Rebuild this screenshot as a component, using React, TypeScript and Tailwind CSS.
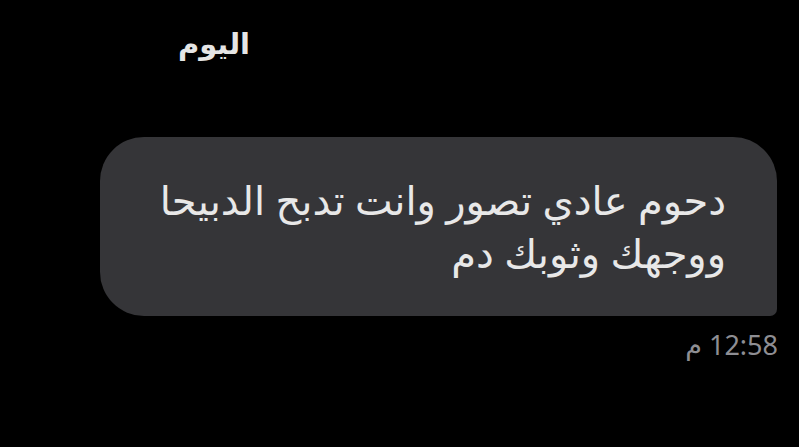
export default function App() {
  return (
    <div
      dir="rtl"
      className="w-[799px] h-[447px] bg-black overflow-hidden flex flex-col"
      style={{ fontFamily: '"Noto Sans", "DejaVu Sans", sans-serif' }}
    >
      <div className="h-[90px] flex items-start pr-[549px] pt-[22px]">
        <span className="text-[29px] font-bold text-[#e5e5e5] leading-[42px]">اليوم</span>
      </div>
      <div className="pl-[100px] pr-[22px] pt-[47px]">
        <div className="h-[179px] bg-[#353538] rounded-[44px] rounded-br-[7px] pr-[51px] pt-[36px]">
          <p className="text-[40px] leading-[53px] text-[#e8e8e8]">
            دحوم عادي تصور وانت تدبح الدبيحا
            <br />
            ووجهك وثوبك دم
          </p>
        </div>
      </div>
      <div className="pr-[21px] pt-[12px]">
        <span className="text-[27px] leading-[34px] text-[#8e8e93]">12:58 م</span>
      </div>
    </div>
  )
}
